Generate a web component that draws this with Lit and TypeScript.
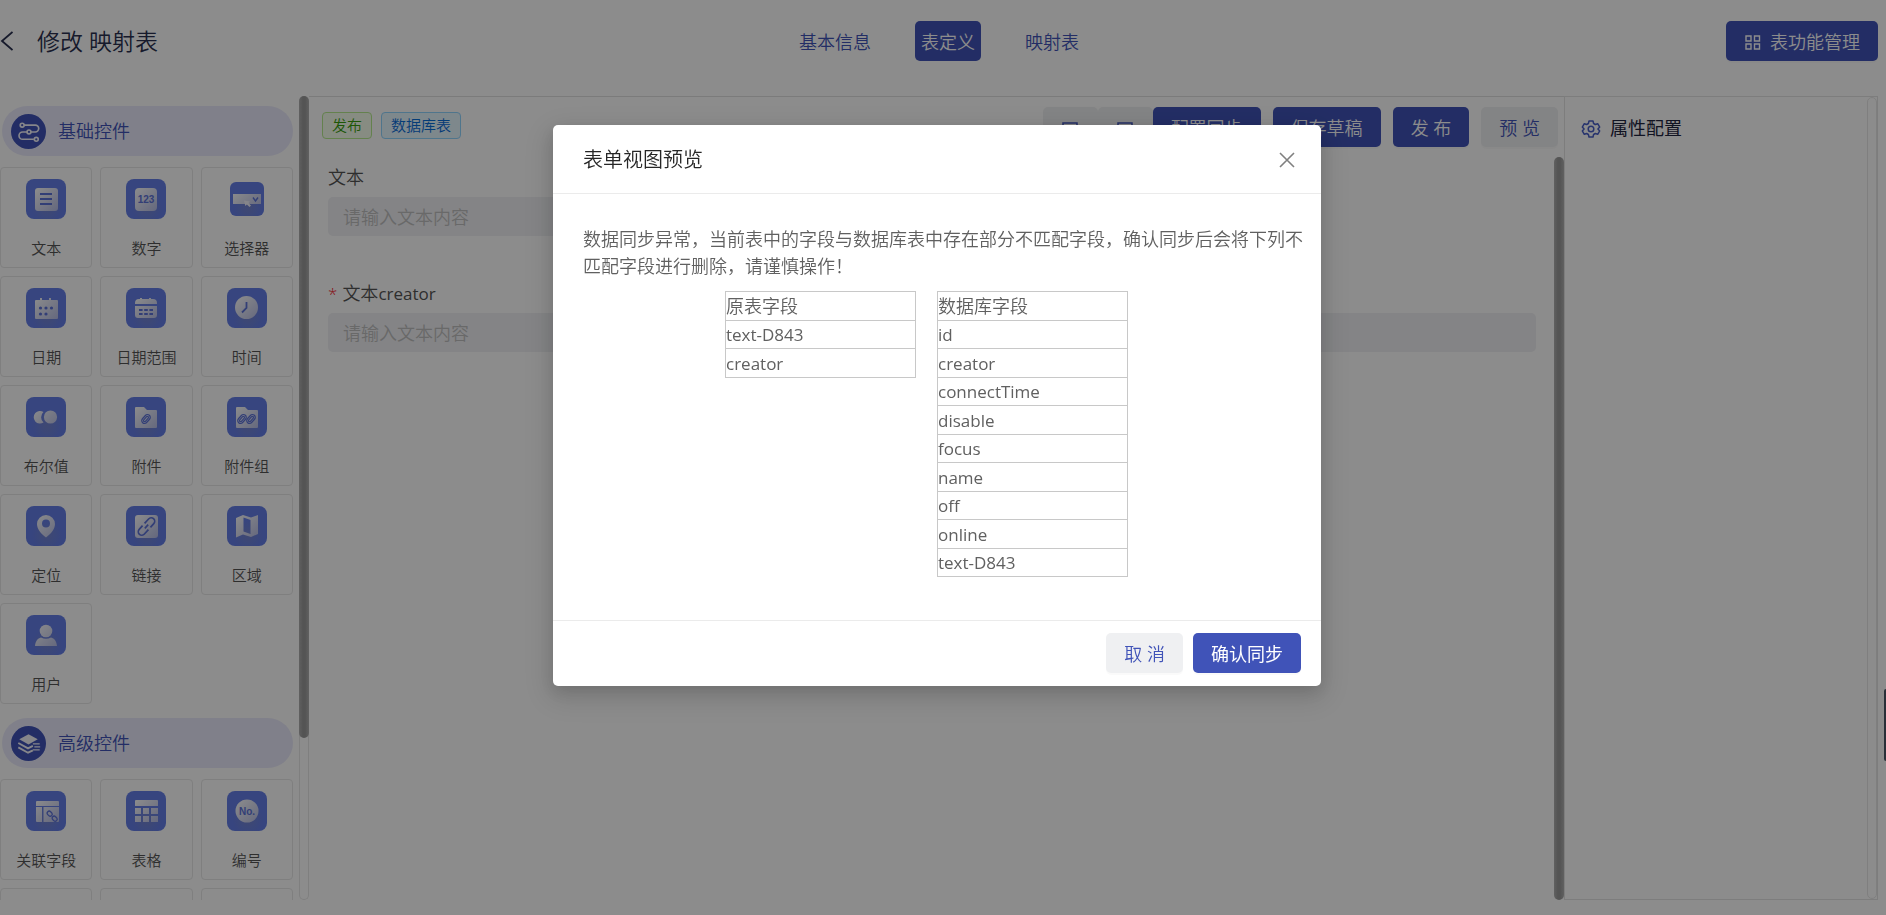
import { LitElement, html, svg, css } from "lit";
import type { TemplateResult } from "lit";
import { customElement, state } from "lit/decorators.js";
import { classMap } from "lit/directives/class-map.js";

interface Widget {
  label: string;
  icon: TemplateResult;
}

const glyph = "url(#glyph)";
const ink = "#5c72d8";

const clip = (x: number, y: number) => svg`
  <g transform="translate(${x} ${y}) rotate(42)" fill="none" stroke=${ink} stroke-width="1.2">
    <rect x="-2.8" y="-5" width="5.6" height="10" rx="2.8"></rect>
    <rect x="-1.1" y="-3.2" width="2.2" height="6.4" rx="1.1"></rect>
  </g>`;

const basicWidgets: Widget[] = [
  {
    label: "文本",
    icon: svg`<rect x="9" y="9" width="23" height="23" rx="3" fill=${glyph}></rect>
      <path d="M14 15h12M14 20h12M14 25h12" stroke=${ink} stroke-width="2"></path>`,
  },
  {
    label: "数字",
    icon: svg`<rect x="9" y="9" width="22" height="23" rx="4" fill=${glyph}></rect>
      <text x="20" y="24" class="mark">123</text>`,
  },
  {
    label: "选择器",
    icon: svg`<rect x="6" y="15" width="28" height="10" fill=${glyph}></rect>
      <path d="M26 18.5l2.5 3.5 2.5-3.5" fill="none" stroke=${ink} stroke-width="1.4"></path>
      <path d="M17 21.5l6 1-1.6 1.4 2.6 2.6-1.5 1.5-2.6-2.6-1.6 1.6z" fill="#f2f3fb"></path>`,
  },
  {
    label: "日期",
    icon: svg`<path d="M9 13a1 1 0 0 1 1-1h4v-2h2v2h7v-2h2v2h6a1 1 0 0 1 1 1v17a1 1 0 0 1-1 1H10a1 1 0 0 1-1-1z" fill=${glyph}></path>
      <g fill=${ink}><circle cx="14.500" cy="20" r="1.6"></circle><circle cx="20" cy="20" r="1.6"></circle><circle cx="25.500" cy="20" r="1.6"></circle><circle cx="14.500" cy="26" r="1.6"></circle><circle cx="20" cy="26" r="1.6"></circle></g>`,
  },
  {
    label: "日期范围",
    icon: svg`<path d="M9 15a4 4 0 0 1 4-4h1v-1h2v1h7v-1h2v1h2a4 4 0 0 1 4 4v1H9zM9 18h22v9a3 3 0 0 1-3 3H12a3 3 0 0 1-3-3z" fill=${glyph}></path>
      <path d="M13 22h14M13 26h14" stroke=${ink} stroke-width="1.8" stroke-dasharray="3.6 1.600"></path>`,
  },
  {
    label: "时间",
    icon: svg`<circle cx="19.500" cy="19.500" r="11.500" fill=${glyph}></circle>
      <path d="M19.500 14v6l-4.500 4.500" fill="none" stroke=${ink} stroke-width="1.8"></path>`,
  },
  {
    label: "布尔值",
    icon: svg`<path d="M17.500 15a7 7 0 0 0 0 10.500A6.300 6.300 0 1 1 17.500 15z" fill=${glyph}></path>
      <circle cx="24.500" cy="20" r="6.600" fill=${glyph}></circle>`,
  },
  {
    label: "附件",
    icon: svg`<path d="M9 11a1 1 0 0 1 1-1h8l3 3h9a1 1 0 0 1 1 1v16a1 1 0 0 1-1 1H10a1 1 0 0 1-1-1z" fill=${glyph}></path>${clip(20, 22)}`,
  },
  {
    label: "附件组",
    icon: svg`<path d="M9 11a1 1 0 0 1 1-1h8l3 3h9a1 1 0 0 1 1 1v16a1 1 0 0 1-1 1H10a1 1 0 0 1-1-1z" fill=${glyph}></path>${clip(15, 22)}${clip(24, 22)}`,
  },
  {
    label: "定位",
    icon: svg`<path fill-rule="evenodd" d="M20 9a9 9 0 0 1 9 9c0 5-4 10-9 13.500C15 28 11 23 11 18a9 9 0 0 1 9-9zM20 13.500a4 4 0 1 0 0 8 4 4 0 0 0 0-8z" fill=${glyph}></path>`,
  },
  {
    label: "链接",
    icon: svg`<rect x="9" y="9" width="23" height="23" rx="3" fill=${glyph}></rect>
      <g transform="translate(20.500 20.500) rotate(42)" fill="none" stroke=${ink} stroke-width="1.700">
        <path d="M-3.500 -1v-6a3.500 3.500 0 0 1 7 0v5M3.500 1v6a3.500 3.500 0 0 1-7 0v-5M0 -2.500v5"></path>
      </g>`,
  },
  {
    label: "区域",
    icon: svg`<path fill-rule="evenodd" d="M9 12l7-3 8 2.500 7-2.500v19l-7 3-8-2.500-7 3zM16.500 11.500v14l7 2.500v-14z" fill=${glyph}></path>`,
  },
  {
    label: "用户",
    icon: svg`<circle cx="20" cy="16" r="6.300" fill=${glyph}></circle>
      <path d="M9 31c.5-5 2.500-7.500 6-8.500q5 2.500 10 0c3.500 1 5.500 3.500 6 8.500z" fill=${glyph}></path>`,
  },
];

const advancedWidgets: Widget[] = [
  {
    label: "关联字段",
    icon: svg`<path d="M10 11a1 1 0 0 1 1-1h21a1 1 0 0 1 1 1v4H10zM10 16h6v15h-5a1 1 0 0 1-1-1zM17.500 16H33v14a1 1 0 0 1-1 1H17.500z" fill=${glyph}></path>
      <g transform="translate(26 25) rotate(-45)" fill="none" stroke=${ink} stroke-width="1.300"><rect x="-2" y="-6" width="4" height="5.500" rx="2"></rect><rect x="-2" y="1" width="4" height="5.500" rx="2"></rect></g>`,
  },
  {
    label: "表格",
    icon: svg`<path d="M9 10a1 1 0 0 1 1-1h21a1 1 0 0 1 1 1v5H9zM9 17h6v6H9zM17 17h6v6h-6zM25 17h7v6h-7zM9 25h6v6H9zM17 25h6v6h-6zM25 25h7v6h-7z" fill=${glyph}></path>`,
  },
  {
    label: "编号",
    icon: svg`<circle cx="20" cy="20" r="11.500" fill=${glyph}></circle><text x="20" y="24" class="mark">No.</text>`,
  },
];

const basicIcon = svg`<svg viewBox="0 0 36 36" class="group-icon" aria-hidden="true">
  <circle cx="18" cy="18" r="18" fill="#4053b8"></circle>
  <g fill="none" stroke="#f4f4fb" stroke-width="1.700">
    <path d="M13.500 11.500H25a3.500 3.500 0 0 1 0 7h-4.500M16.500 18.500H12a3.700 3.700 0 0 0 0 7.500h11.500"></path>
    <circle cx="11.500" cy="11.500" r="2"></circle><circle cx="18.500" cy="18.500" r="2"></circle><circle cx="26" cy="26" r="2"></circle>
  </g></svg>`;

const advancedIcon = svg`<svg viewBox="0 0 36 36" class="group-icon" aria-hidden="true">
  <circle cx="18" cy="18" r="18" fill="#4053b8"></circle>
  <path d="M18 8.500l9.500 5-9.500 5.500-9.500-5.500z" fill="#f4f4fb"></path>
  <path d="M7.500 17.500L17.500 23l5-2.500M7.500 22L17.500 27.500l5-2.500" fill="none" stroke="#f4f4fb" stroke-width="2"></path>
  <path d="M22.500 18.500h7M24 21.500h6M22.500 24.500h7" stroke="#f4f4fb" stroke-width="1.300"></path></svg>`;

@customElement("app-root")
export class AppRoot extends LitElement {
  @state() private activeTab = "表定义";

  private tabs = ["基本信息", "表定义", "映射表"];
  private sourceFields = ["text-D843", "creator"];
  private databaseFields = [
    "id", "creator", "connectTime", "disable", "focus", "name", "off", "online", "text-D843",
  ];

  static styles = css`
    :host {
      display: block;
      --primary: #4053b8;
      --soft: #eff0f2;
      --line: #e8e8e8;
      font-family: "Open Sans", "Noto Sans CJK SC", sans-serif;
      font-size: 18px;
      font-weight: 350;
      line-height: 27px;
      color: #555;
    }
    * { box-sizing: border-box; }
    button, input { font: inherit; }
    button { cursor: pointer; white-space: nowrap; }
    .page {
      height: 100vh;
      display: flex;
      flex-direction: column;
      padding: 0 8px 15px 0;
      background: #fff;
      overflow: hidden;
    }
    .header {
      flex: none;
      display: grid;
      grid-template-columns: 1fr auto 1fr;
      align-items: center;
      height: 96px;
      padding-bottom: 14px;
    }
    .heading { display: flex; align-items: center; gap: 24px; color: #2a3150; }
    .back { display: flex; padding: 0; border: 0; background: none; color: inherit; }
    .back svg { width: 13px; height: 20px; }
    h1 { margin: 0; font-size: 23px; font-weight: 350; line-height: 32px; }
    .tabs { display: flex; gap: 38px; }
    .tab {
      height: 40px;
      padding: 2px 6px 0;
      border: 0;
      border-radius: 5px;
      background: none;
      color: var(--primary);
    }
    .tab.active { background: var(--primary); color: #fff; }
    .btn {
      height: 40px;
      padding: 2px 18px 0;
      border: 0;
      border-radius: 5px;
      background: var(--soft);
      color: var(--primary);
      box-shadow: 0 2px 0 rgba(0, 0, 0, 0.02);
    }
    .btn.primary { background: var(--primary); color: #fff; }
    .btn.manage { display: flex; align-items: center; gap: 9px; justify-self: end; }
    .btn.manage svg { width: 17px; height: 17px; }
    .main {
      flex: 1;
      min-height: 0;
      display: grid;
      grid-template-columns: 309px 1fr 314px;
    }
    .sidebar { display: flex; gap: 6px; min-height: 0; }
    .palette { flex: 1; min-width: 0; overflow: hidden; padding-top: 10px; }
    .track {
      flex: none;
      width: 10px;
      border: 1px solid var(--line);
      border-radius: 5px;
    }
    .thumb {
      flex: none;
      width: 10px;
      border-radius: 5px;
      background: linear-gradient(90deg, #b0b0b0, #999 40%, #999 60%, #b0b0b0);
    }
    .sidebar .track { border-top: 0; }
    .sidebar .thumb { height: 642px; margin-left: -1px; }
    .group {
      display: flex;
      align-items: center;
      gap: 12px;
      height: 50px;
      margin: 0 0 11px 2px;
      padding-left: 9px;
      border-radius: 25px;
      background: #eaeafb;
      color: var(--primary);
      font-size: 18px;
      font-weight: 350;
    }
    .group-icon { width: 35px; height: 35px; }
    .cards {
      display: grid;
      grid-template-columns: repeat(3, 1fr);
      gap: 8px;
      margin-bottom: 14px;
    }
    .card {
      display: flex;
      flex-direction: column;
      align-items: center;
      gap: 18px;
      height: 101px;
      padding: 11px 0 0;
      border: 1px solid var(--line);
      border-radius: 4px;
      background: #fff;
      color: #555;
      font-size: 15px;
      line-height: 22px;
    }
    .card svg { width: 40px; height: 40px; flex: none; }
    .mark {
      font: 700 10px "Liberation Sans", sans-serif;
      text-anchor: middle;
      fill: #5c72d8;
    }
    .defs { position: absolute; width: 0; height: 0; }
    .canvas {
      display: flex;
      flex-direction: column;
      min-width: 0;
      border-top: 1px solid #e0e0e0;
    }
    .toolbar { display: flex; justify-content: space-between; padding: 10px 6px 0 13px; }
    .tags { display: flex; gap: 9px; padding-top: 5px; }
    .tag {
      height: 27px;
      padding: 0 9px;
      border: 1px solid;
      border-radius: 4px;
      font-size: 15px;
      line-height: 25px;
    }
    .tag.green { color: #389e0d; border-color: #b7eb8f; background: #f6ffed; }
    .tag.blue { color: #096dd9; border-color: #91d5ff; background: #e6f7ff; }
    .actions { display: flex; gap: 12px; }
    .history { display: flex; margin-right: -12px; }
    .history .btn { width: 55px; padding: 0; }
    .history svg { width: 18px; height: 18px; vertical-align: -4px; }
    .work { flex: 1; display: flex; min-height: 0; padding-top: 10px; }
    .work .thumb { height: 100%; }
    .form {
      flex: 1;
      display: grid;
      grid-template-columns: 1fr 1fr;
      align-content: start;
      row-gap: 44px;
      padding: 7px 18px 0 19px;
    }
    .field { display: flex; flex-direction: column; gap: 6px; }
    .field.wide { grid-column: 1 / -1; }
    .field.half { padding-right: 8px; }
    .field label { font-weight: 350; }
    .latin { font-size: 17px; font-weight: 400; }
    .required::before { content: "*"; margin-right: 5px; color: #f5222d; font-size: 17px; }
    .field input {
      width: 100%;
      height: 39px;
      padding: 0 15px;
      border: 0;
      border-radius: 5px;
      background: #f0f1f4;
    }
    .field input::placeholder { color: #bfbfbf; opacity: 1; }
    .props {
      display: flex;
      justify-content: space-between;
      border: 1px solid #e4e4e4;
    }
    .props h2 {
      display: flex;
      align-items: flex-start;
      gap: 9px;
      margin: 0;
      padding: 18px 0 0 16px;
      color: #1f2540;
      font-size: 18px;
      font-weight: 400;
    }
    .props svg { width: 20px; height: 20px; margin-top: 4px; }
    .drawer {
      position: fixed;
      right: 0;
      top: 689px;
      width: 2px;
      height: 72px;
      border-radius: 2px 0 0 2px;
      background: #4c5766;
    }
    .mask {
      position: fixed;
      inset: 0;
      display: flex;
      justify-content: center;
      align-items: flex-start;
      padding: 125px 12px 0 0;
      background: rgba(0, 0, 0, 0.45);
    }
    .dialog {
      width: 768px;
      border-radius: 5px;
      background: #fff;
      color: #606060;
      box-shadow: 0 6px 16px rgba(0, 0, 0, 0.12), 0 9px 28px 8px rgba(0, 0, 0, 0.1);
    }
    .dialog-head {
      display: flex;
      justify-content: space-between;
      align-items: center;
      height: 69px;
      padding: 2px 25px 0 30px;
      border-bottom: 1px solid #ebebeb;
      color: #262626;
    }
    .dialog-head h2 { margin: 0; font-size: 20px; font-weight: 350; line-height: 30px; }
    .close { display: flex; padding: 0; border: 0; background: none; color: #808080; }
    .close svg { width: 18px; height: 18px; }
    .dialog-body { padding: 32px 18px 43px 30px; }
    .dialog-body p { margin: 0; }
    .tables {
      display: flex;
      justify-content: center;
      align-items: flex-start;
      gap: 21px;
      margin-top: 11px;
      padding-right: 33px;
    }
    table { width: 191px; border-collapse: collapse; }
    th, td {
      padding: 0;
      border: 1px solid #c8c8c8;
      font-weight: 350;
      text-align: left;
      line-height: 27px;
    }
    td { font-size: 17px; font-weight: 400; }
    tr:nth-child(odd) { height: 29px; }
    tr:nth-child(even) { height: 28px; }
    .dialog-foot {
      display: flex;
      justify-content: flex-end;
      gap: 10px;
      padding: 12px 20px 13px;
      border-top: 1px solid #ebebeb;
    }
    .dialog-foot .btn.primary { font-weight: 400; }
  `;

  private renderCards(widgets: Widget[]) {
    return widgets.map(
      (w) => html`<button class="card" type="button">
        <svg viewBox="0 0 40 40" aria-hidden="true">
          ${w.label === "选择器"
            ? svg`<rect x="3" y="3" width="34" height="34" rx="6" fill="url(#tile)"></rect>`
            : svg`<rect width="40" height="40" rx="8" fill="url(#tile)"></rect>`}
          ${w.icon}
        </svg>
        <span>${w.label}</span>
      </button>`
    );
  }

  private renderTable(title: string, rows: string[]) {
    return html`<table>
      <tbody>
        <tr><th scope="col">${title}</th></tr>
        ${rows.map((row) => html`<tr><td>${row}</td></tr>`)}
      </tbody>
    </table>`;
  }

  render() {
    return html`
      <svg class="defs" aria-hidden="true">
        <defs>
          <linearGradient id="glyph" gradientUnits="userSpaceOnUse" x1="9" y1="9" x2="31" y2="31">
            <stop offset="0" stop-color="#ffffff"></stop>
            <stop offset="1" stop-color="#b9bfe6"></stop>
          </linearGradient>
          <radialGradient id="tile" gradientUnits="userSpaceOnUse" cx="21" cy="29" r="16">
            <stop offset="0" stop-color="#7384cf"></stop>
            <stop offset="1" stop-color="#647ee8"></stop>
          </radialGradient>
        </defs>
      </svg>
      <div class="page">
        <header class="header">
          <div class="heading">
            <button class="back" type="button" aria-label="返回">
              <svg viewBox="0 0 13 20" fill="none" stroke="currentColor" stroke-width="1.8"><path d="M12.500 1L2 10l10.500 9"></path></svg>
            </button>
            <h1>修改 映射表</h1>
          </div>
          <nav class="tabs">
            ${this.tabs.map(
              (t) => html`<button
                type="button"
                class=${classMap({ tab: true, active: t === this.activeTab })}
                @click=${() => (this.activeTab = t)}
              >${t}</button>`
            )}
          </nav>
          <button class="btn primary manage" type="button">
            <svg viewBox="0 0 17 17" fill="none" stroke="currentColor" stroke-width="1.400" aria-hidden="true">
              <path d="M2 2h5v5H2zM10.500 2h5v5h-5zM2 10h5v5H2zM10.500 10h5v5h-5z"></path>
            </svg>
            表功能管理
          </button>
        </header>
        <main class="main">
          <aside class="sidebar">
            <div class="palette">
              <h2 class="group">${basicIcon}基础控件</h2>
              <div class="cards">${this.renderCards(basicWidgets)}</div>
              <h2 class="group">${advancedIcon}高级控件</h2>
              <div class="cards">
                ${this.renderCards(advancedWidgets)}
                <div class="card"></div>
                <div class="card"></div>
                <div class="card"></div>
              </div>
            </div>
            <div class="track"><div class="thumb"></div></div>
          </aside>
          <section class="canvas">
            <div class="toolbar">
              <div class="tags">
                <span class="tag green">发布</span>
                <span class="tag blue">数据库表</span>
              </div>
              <div class="actions">
                <div class="history">
                  <button class="btn" type="button" aria-label="撤销">
                    <svg viewBox="0 0 18 18" fill="none" stroke="currentColor" stroke-width="1.500"><path d="M2 6V3h14v11H6M9 11l-3 3 3 3"></path></svg>
                  </button>
                  <button class="btn" type="button" aria-label="重做">
                    <svg viewBox="0 0 18 18" fill="none" stroke="currentColor" stroke-width="1.500"><path d="M16 6V3H2v11h10M9 11l3 3-3 3"></path></svg>
                  </button>
                </div>
                <button class="btn primary" type="button">配置同步</button>
                <button class="btn primary" type="button">保存草稿</button>
                <button class="btn primary" type="button">发 布</button>
                <button class="btn" type="button">预 览</button>
              </div>
            </div>
            <div class="work">
              <div class="form">
                <div class="field half">
                  <label for="text">文本</label>
                  <input id="text" placeholder="请输入文本内容" />
                </div>
                <div class="field wide">
                  <label for="creator" class="required">文本<span class="latin">creator</span></label>
                  <input id="creator" placeholder="请输入文本内容" />
                </div>
              </div>
              <div class="thumb"></div>
            </div>
          </section>
          <aside class="props">
            <h2>
              <svg viewBox="0 0 20 20" fill="none" stroke="#4a60c8" stroke-width="1.500" stroke-linejoin="round" aria-hidden="true">
                <path d="M8 2h4l.6 2.500 1.700 1 2.400-.8 2 3.400L16.900 10l1.800 1.900-2 3.400-2.400-.8-1.700 1L12 18H8l-.6-2.500-1.700-1-2.400.8-2-3.400L3.100 10 1.300 8.100l2-3.400 2.400.8 1.700-1z"></path>
                <circle cx="10" cy="10" r="2.800"></circle>
              </svg>
              属性配置
            </h2>
            <div class="track"></div>
          </aside>
        </main>
        <div class="drawer"></div>
      </div>
      <div class="mask">
        <div class="dialog" role="dialog" aria-modal="true" aria-labelledby="dialog-title">
          <div class="dialog-head">
            <h2 id="dialog-title">表单视图预览</h2>
            <button class="close" type="button" aria-label="关闭">
              <svg viewBox="0 0 18 18" fill="none" stroke="currentColor" stroke-width="1.600"><path d="M2 2l14 14M16 2L2 16"></path></svg>
            </button>
          </div>
          <div class="dialog-body">
            <p>数据同步异常，当前表中的字段与数据库表中存在部分不匹配字段，确认同步后会将下列不匹配字段进行删除，请谨慎操作！</p>
            <div class="tables">
              ${this.renderTable("原表字段", this.sourceFields)}
              ${this.renderTable("数据库字段", this.databaseFields)}
            </div>
          </div>
          <div class="dialog-foot">
            <button class="btn" type="button">取 消</button>
            <button class="btn primary" type="button">确认同步</button>
          </div>
        </div>
      </div>
    `;
  }
}
